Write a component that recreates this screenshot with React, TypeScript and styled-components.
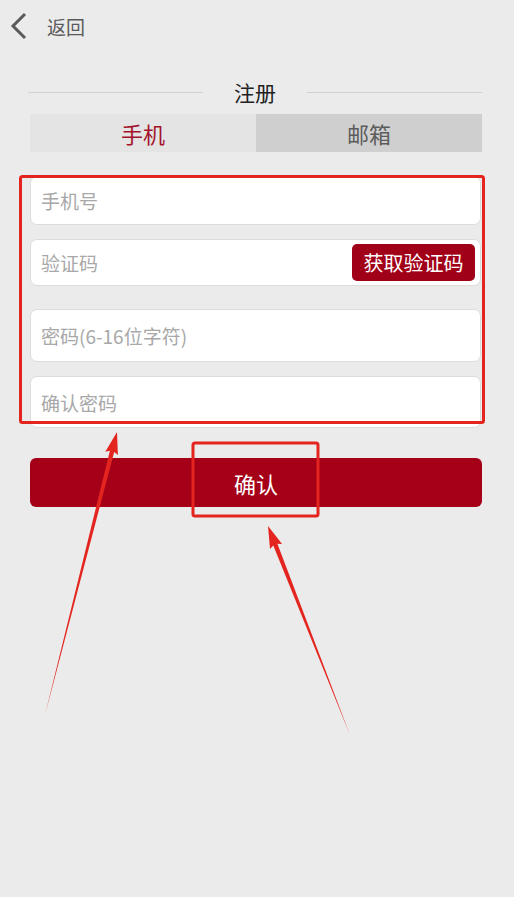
import React from 'react';
import styled, { createGlobalStyle } from 'styled-components';

const GlobalStyle = createGlobalStyle`
  html, body {
    margin: 0;
    padding: 0;
    background: #ebebeb;
    font-family: "Noto Sans CJK SC", "Noto Sans", sans-serif;
  }
`;

const Page = styled.div`
  position: relative;
  width: 514px;
  height: 897px;
  overflow: hidden;
  background: #ebebeb;
`;

const Header = styled.div`
  display: flex;
  align-items: center;
  height: 52px;
  padding-left: 10px;
  gap: 19px;
`;

const BackText = styled.span`
  font-size: 19px;
  color: #5a5a5a;
  line-height: 1;
`;

const TitleRow = styled.div`
  display: flex;
  align-items: center;
  margin: 26px 32px 0 28px;
  gap: 31px;
`;

const TitleLine = styled.div`
  flex: 1;
  height: 1px;
  background: #d2d2d2;
`;

const Title = styled.span`
  font-size: 21px;
  color: #222;
  line-height: 28px;
`;

const Tabs = styled.div`
  display: flex;
  margin: 8px 32px 0 30px;
  height: 38px;
`;

const Tab = styled.div<{ $active?: boolean }>`
  flex: 1;
  display: flex;
  align-items: center;
  justify-content: center;
  font-size: 22px;
  color: ${p => (p.$active ? '#a3132b' : '#5c5c5c')};
  background: ${p => (p.$active ? '#e4e4e4' : '#cfcfcf')};
`;

const Form = styled.div`
  display: flex;
  flex-direction: column;
  margin: 24px 33px 0 30px;
`;

const Field = styled.div<{ $h: number; $gap: number }>`
  display: flex;
  align-items: center;
  justify-content: space-between;
  height: ${p => p.$h}px;
  margin-top: ${p => p.$gap}px;
  box-sizing: border-box;
  background: #fff;
  border: 1px solid #dcdcdc;
  border-radius: 7px;
  padding: 0 5px 0 10px;
`;

const Placeholder = styled.span`
  font-size: 19px;
  color: #a8a8a8;
  line-height: 1;
`;

const CodeButton = styled.div`
  display: flex;
  align-items: center;
  justify-content: center;
  width: 123px;
  height: 37px;
  border-radius: 5px;
  background: #a10019;
  color: #fff;
  font-size: 20px;
`;

const ConfirmButton = styled.div`
  display: flex;
  align-items: center;
  justify-content: center;
  margin: 30px 32px 0 30px;
  height: 49px;
  border-radius: 6px;
  background: #a50017;
  color: #fff;
  font-size: 22px;
`;

const Overlay = styled.svg`
  position: absolute;
  left: 0;
  top: 0;
  pointer-events: none;
`;

type Pt = [number, number];

const arrowPoints = (tail: Pt, tip: Pt): string => {
  const dx = tip[0] - tail[0];
  const dy = tip[1] - tail[1];
  const len = Math.hypot(dx, dy);
  const ux = dx / len;
  const uy = dy / len;
  const nx = -uy;
  const ny = ux;
  const bx = tip[0] - ux * 20;
  const by = tip[1] - uy * 20;
  const sw = 2.2;
  const hw = 6.5;
  const pts: Pt[] = [
    tail,
    [bx + nx * sw, by + ny * sw],
    [bx + nx * hw - ux * 2, by + ny * hw - uy * 2],
    tip,
    [bx - nx * hw - ux * 2, by - ny * hw - uy * 2],
    [bx - nx * sw, by - ny * sw],
  ];
  return pts.map(p => `${p[0].toFixed(1)},${p[1].toFixed(1)}`).join(' ');
};

const fields = [
  { label: '手机号', h: 49, gap: 0 },
  { label: '验证码', h: 47, gap: 14, code: true },
  { label: '密码(6-16位字符)', h: 53, gap: 23 },
  { label: '确认密码', h: 52, gap: 14 },
];

export default function App() {
  return (
    <Page>
      <GlobalStyle />
      <Header>
        <svg width="18" height="28" viewBox="0 0 18 28">
          <polyline points="15,2 3,14 15,26" fill="none" stroke="#5a5a5a" strokeWidth="3" strokeLinejoin="miter" />
        </svg>
        <BackText>返回</BackText>
      </Header>
      <TitleRow>
        <TitleLine />
        <Title>注册</Title>
        <TitleLine />
      </TitleRow>
      <Tabs>
        <Tab $active>手机</Tab>
        <Tab>邮箱</Tab>
      </Tabs>
      <Form>
        {fields.map(f => (
          <Field key={f.label} $h={f.h} $gap={f.gap}>
            <Placeholder>{f.label}</Placeholder>
            {f.code && <CodeButton>获取验证码</CodeButton>}
          </Field>
        ))}
      </Form>
      <ConfirmButton>确认</ConfirmButton>

      <Overlay width="514" height="897">
        <rect x="20.5" y="176.5" width="463" height="246" rx="2" fill="none" stroke="#e4251f" strokeWidth="3" />
        <rect x="193" y="443" width="125" height="73" rx="2" fill="none" stroke="#e4251f" strokeWidth="3" />
        <polygon points={arrowPoints([45, 715], [117, 432])} fill="#e4251f" />
        <polygon points={arrowPoints([350, 735], [268, 526])} fill="#e4251f" />
      </Overlay>
    </Page>
  );
}
